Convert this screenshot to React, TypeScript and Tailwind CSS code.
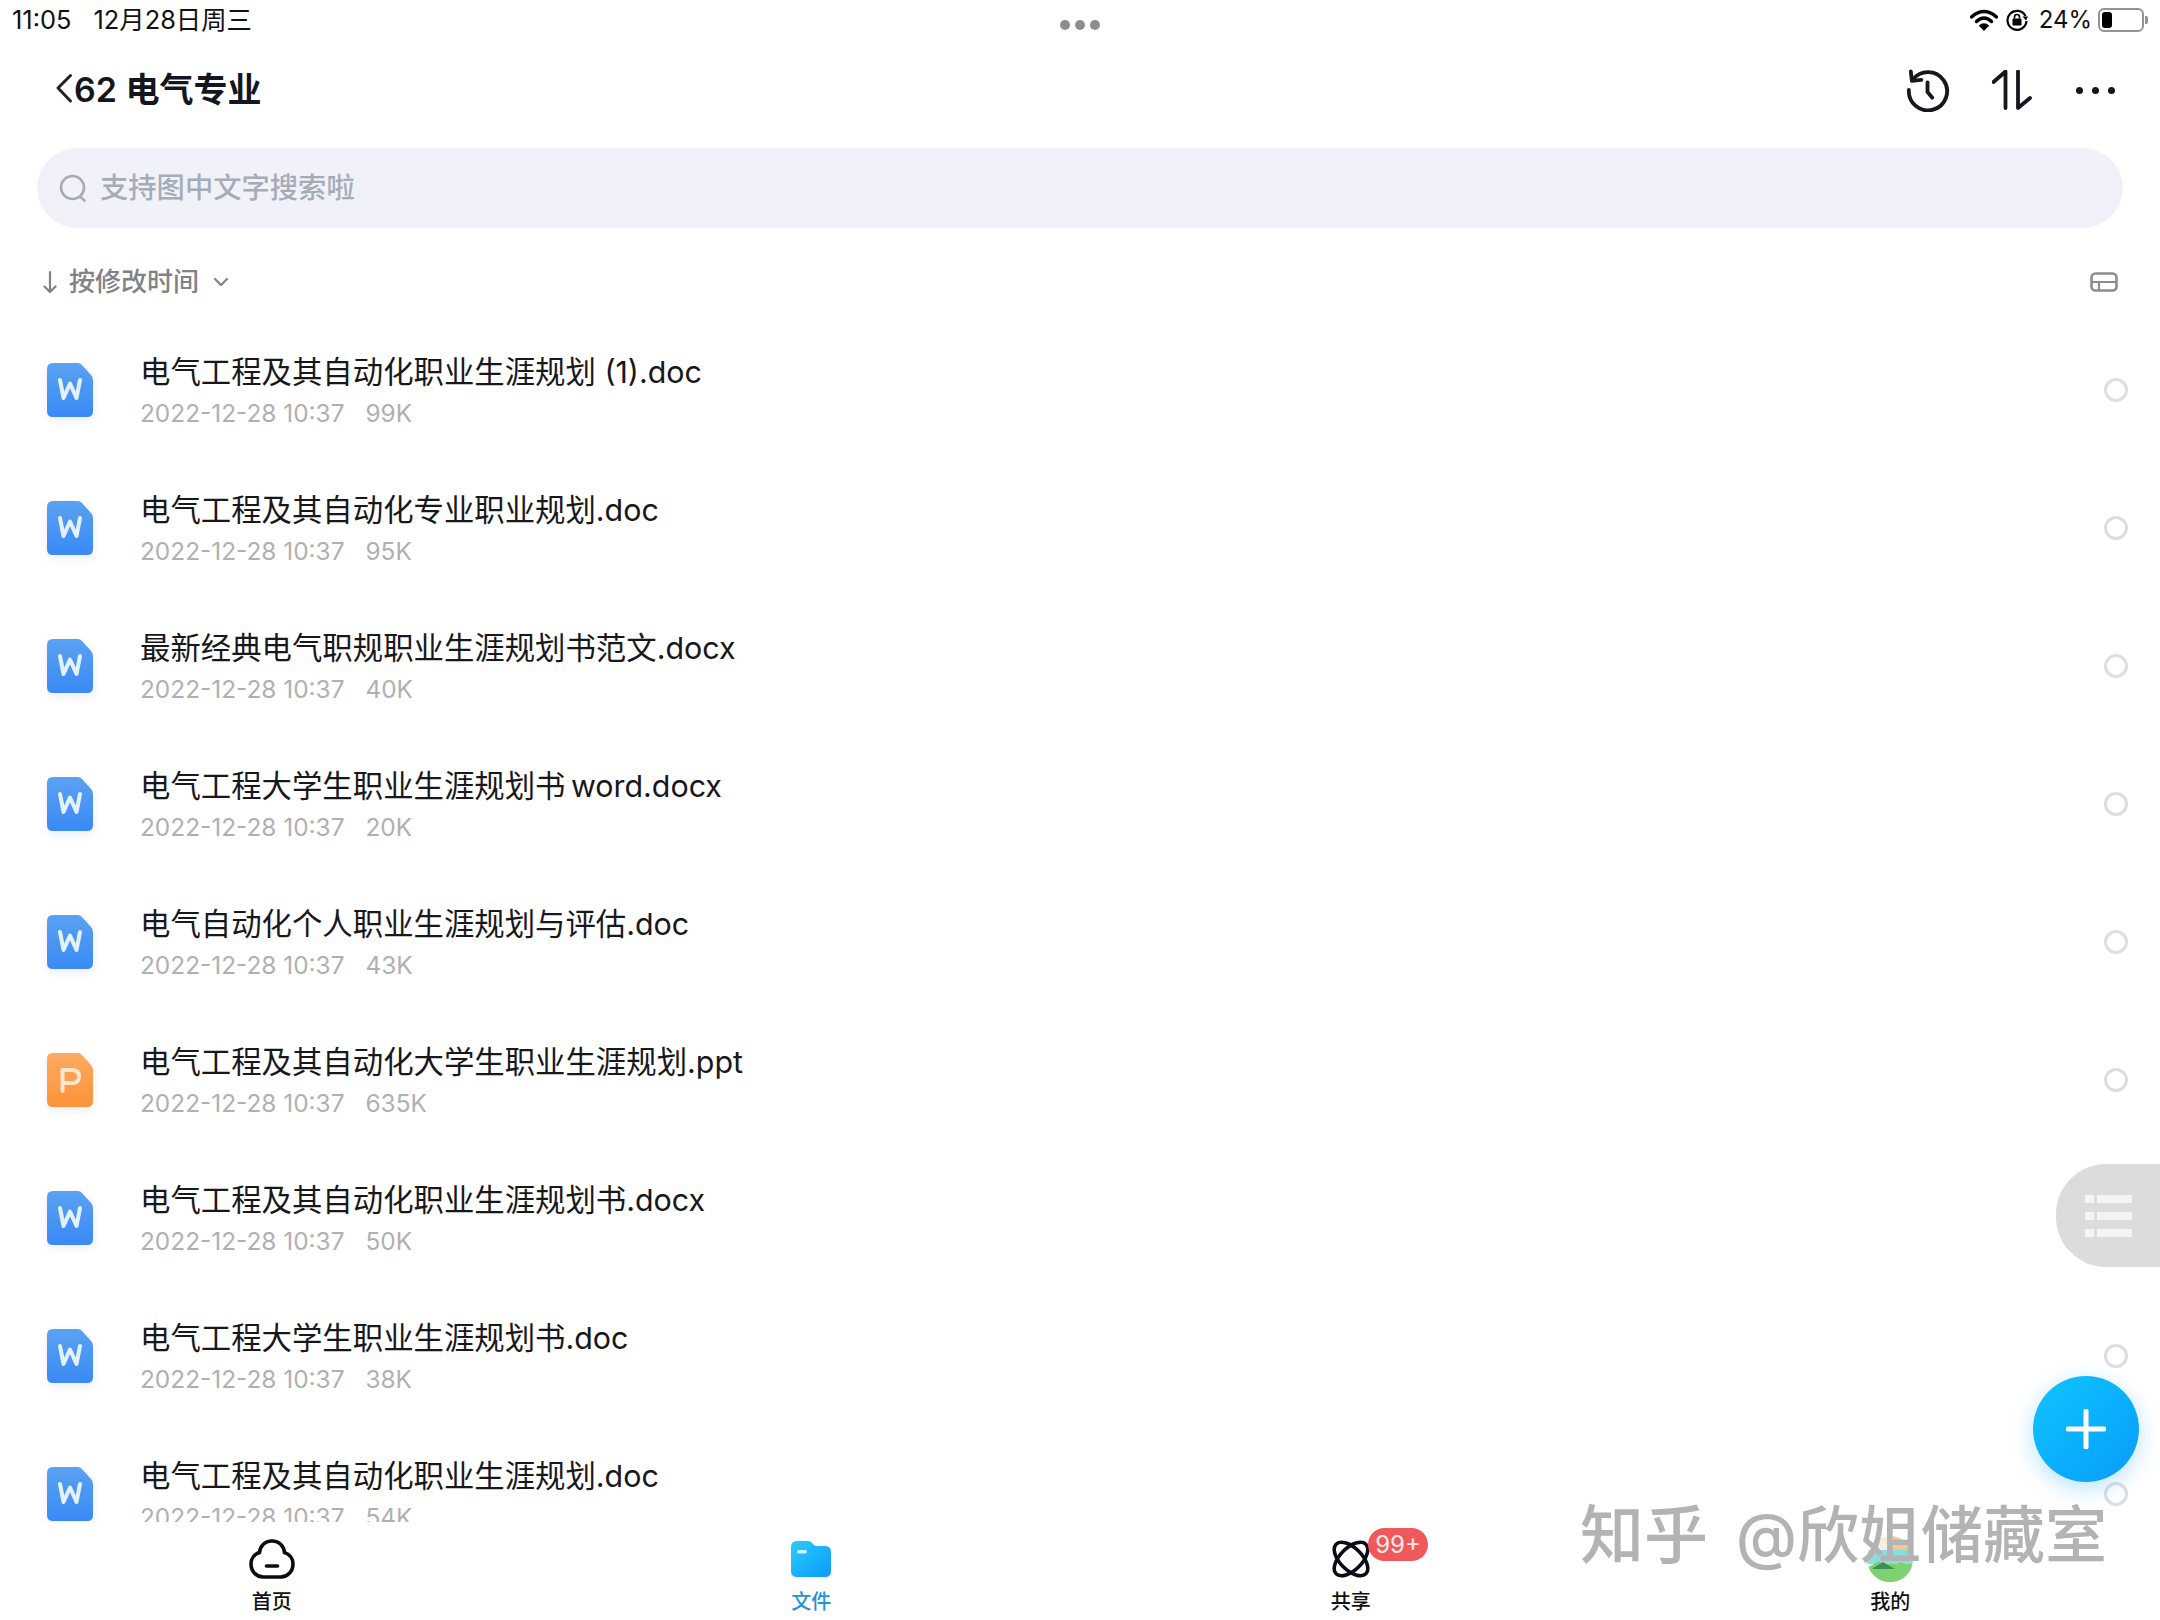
import React from 'react';

const FILES = [
  { name: '电气工程及其自动化职业生涯规划 (1).doc', size: '99K', type: 'W' },
  { name: '电气工程及其自动化专业职业规划.doc', size: '95K', type: 'W' },
  { name: '最新经典电气职规职业生涯规划书范文.docx', size: '40K', type: 'W' },
  { name: '电气工程大学生职业生涯规划书\u2009word.docx', size: '20K', type: 'W' },
  { name: '电气自动化个人职业生涯规划与评估.doc', size: '43K', type: 'W' },
  { name: '电气工程及其自动化大学生职业生涯规划.ppt', size: '635K', type: 'P' },
  { name: '电气工程及其自动化职业生涯规划书.docx', size: '50K', type: 'W' },
  { name: '电气工程大学生职业生涯规划书.doc', size: '38K', type: 'W' },
  { name: '电气工程及其自动化职业生涯规划.doc', size: '54K', type: 'W' },
];

const FONT = "font-['Inter','Noto_Sans_CJK_SC',sans-serif]";

const FileIcon: React.FC<{ type: string; id: number }> = ({ type, id }) => {
  const isWord = type === 'W';
  return (
    <svg width="46" height="54" viewBox="0 0 46 54" className="shrink-0 drop-shadow-[0_3px_5px_rgba(80,110,170,0.12)]">
      <defs>
        <linearGradient id={`file-${id}`} x1="0" y1="0" x2="0" y2="1">
          <stop offset="0" stopColor={isWord ? '#5aa2f2' : '#fdaa62'} />
          <stop offset="1" stopColor={isWord ? '#3a89f5' : '#fd9338'} />
        </linearGradient>
      </defs>
      <path
        d="M6 0H31Q33 0 35 2L44 12Q46 14 46 17V48Q46 54 40 54H6Q0 54 0 48V6Q0 0 6 0Z"
        fill={`url(#file-${id})`}
      />
      {isWord ? (
        <path
          d="M13 17L16.5 35L23 20.5L29.5 35L33 17"
          fill="none"
          stroke="#e3f1fd"
          strokeWidth="4"
          strokeLinecap="round"
          strokeLinejoin="round"
        />
      ) : (
        <path
          d="M15.5 38V17H25Q32 17 32 23.5T25 30H15.5"
          fill="none"
          stroke="#fde6cf"
          strokeWidth="4"
          strokeLinecap="round"
          strokeLinejoin="round"
        />
      )}
    </svg>
  );
};

const StatusBar = () => (
  <div className="h-[40px] shrink-0 relative flex items-center justify-between px-[12px] leading-none text-[#111]">
    <div className="flex items-center gap-[22px] -mt-[1px] text-[25.4px]">
      <span>11:05</span>
      <span>12月28日周三</span>
    </div>
    <div className="absolute left-[1060px] top-[20px] flex gap-[5px]">
      <span className="w-[10px] h-[10px] rounded-full bg-[#8d8d8f]" />
      <span className="w-[10px] h-[10px] rounded-full bg-[#8d8d8f]" />
      <span className="w-[10px] h-[10px] rounded-full bg-[#8d8d8f]" />
    </div>
    <div className="flex items-center -mt-[1px] text-[24px]">
      <svg width="28" height="22" viewBox="0 0 28 22" className="mr-[7px]">
        <path d="M1.5 8Q14 -3 26.5 8" fill="none" stroke="#000" strokeWidth="3.4" strokeLinecap="round" />
        <path d="M6.5 12.5Q14 5.5 21.5 12.5" fill="none" stroke="#000" strokeWidth="3.4" strokeLinecap="round" />
        <path d="M14 22L8.8 16.4Q14 12 19.2 16.4Z" fill="#000" />
      </svg>
      <svg width="24" height="24" viewBox="0 0 24 24" className="mr-[10px]">
        <path d="M20.5 8A9.5 9.5 0 1 0 21.5 13" fill="none" stroke="#000" strokeWidth="2.2" />
        <path d="M17.5 8.5H23L21 12.5Z" fill="#000" />
        <rect x="7.5" y="10.5" width="9" height="7" rx="1.2" fill="#000" />
        <path d="M9.5 10.5V9A2.5 2.5 0 0 1 14.5 9V10.5" fill="none" stroke="#000" strokeWidth="1.6" />
      </svg>
      <span className="mr-[6px]">24%</span>
      <div className="w-[46px] h-[24px] rounded-[6px] border-2 border-[#939393] p-[2px] flex">
        <div className="w-[10px] h-full rounded-[3px] bg-black" />
      </div>
      <div className="w-[3px] h-[8px] ml-[1px] rounded-r-[2px] bg-[#939393]" />
    </div>
  </div>
);

const TitleBar = () => (
  <div className="h-[100px] shrink-0 flex items-center justify-between pl-[55px] pr-[45px]">
    <div className="flex items-center text-[#14161f]">
      <svg width="18" height="32" viewBox="0 0 18 32" className="-mt-[3px]">
        <path d="M15.5 2.5L3 15L15.5 28" fill="none" stroke="#20232c" strokeWidth="3" strokeLinecap="round" strokeLinejoin="round" />
      </svg>
      <span className="text-[34px] font-semibold leading-none ml-[1px]">62 电气专业</span>
    </div>
    <div className="flex items-center">
      <svg width="44" height="44" viewBox="0 0 46 46" className="mr-[42px]">
        <path d="M6.8 12.5A20 20 0 1 1 3 23" fill="none" stroke="#15171f" strokeWidth="4" strokeLinecap="round" />
        <path d="M5 3.5L6.2 13.5L16 12.5" fill="none" stroke="#15171f" strokeWidth="4" strokeLinecap="round" strokeLinejoin="round" />
        <path d="M22.5 15V25L27.5 31" fill="none" stroke="#15171f" strokeWidth="4" strokeLinecap="round" strokeLinejoin="round" />
      </svg>
      <svg width="40" height="40" viewBox="0 0 40 40" className="mr-[44px]">
        <path d="M1.5 12L13.5 1.5V38" fill="none" stroke="#15171f" strokeWidth="3.8" strokeLinecap="round" strokeLinejoin="round" />
        <path d="M26 1.5V38L38 28" fill="none" stroke="#15171f" strokeWidth="3.8" strokeLinecap="round" strokeLinejoin="round" />
      </svg>
      <div className="flex gap-[9px]">
        <span className="w-[7px] h-[7px] rounded-full bg-[#15171f]" />
        <span className="w-[7px] h-[7px] rounded-full bg-[#15171f]" />
        <span className="w-[7px] h-[7px] rounded-full bg-[#15171f]" />
      </div>
    </div>
  </div>
);

const SearchBar = () => (
  <div className="mx-[37px] mt-[8px] h-[80px] shrink-0 rounded-full bg-[#f1f2f9] flex items-center pl-[22px]">
    <svg width="28" height="28" viewBox="0 0 28 28">
      <circle cx="13.5" cy="13.5" r="11.5" fill="none" stroke="#a5acb8" strokeWidth="2.6" />
      <path d="M21 22.5L25.5 26.5" stroke="#a5acb8" strokeWidth="2.6" strokeLinecap="round" />
    </svg>
    <span className="ml-[13px] text-[28.3px] leading-none font-medium text-[#a5acb8]">支持图中文字搜索啦</span>
  </div>
);

const SortRow = () => (
  <div className="h-[93px] shrink-0 flex items-center justify-between pt-[14px] pl-[43px] pr-[42px]">
    <div className="flex items-center text-[#7f8287]">
      <svg width="14" height="24" viewBox="0 0 14 24">
        <path d="M7 2V22M1.5 16.5L7 22L12.5 16.5" fill="none" stroke="#7f8287" strokeWidth="2.2" strokeLinecap="round" strokeLinejoin="round" />
      </svg>
      <span className="ml-[12px] text-[26px] leading-none font-medium">按修改时间</span>
      <svg width="16" height="10" viewBox="0 0 16 10" className="ml-[14px]">
        <path d="M2 2L8 8L14 2" fill="none" stroke="#7f8287" strokeWidth="2.2" strokeLinecap="round" strokeLinejoin="round" />
      </svg>
    </div>
    <svg width="28" height="20" viewBox="0 0 28 20">
      <rect x="1.5" y="1.5" width="25" height="17" rx="4" fill="none" stroke="#8b8d8f" strokeWidth="2.6" />
      <path d="M1.5 10H26.5M9 10V18" stroke="#8b8d8f" strokeWidth="2.2" />
    </svg>
  </div>
);

const Tab: React.FC<{ label: string; icon: React.ReactNode; active?: boolean }> = ({ label, icon, active }) => (
  <div className="flex flex-col items-center">
    <div className="h-[74px] flex items-center justify-center">{icon}</div>
    <span className={`text-[20px] leading-none font-medium -mt-[4px] ${active ? 'text-[#1f93d9]' : 'text-[#111]'}`}>
      {label}
    </span>
  </div>
);

const TabBar = () => (
  <div className="relative h-[98px] shrink-0 grid grid-cols-4 bg-white pl-[2px]">
    <Tab label="首页" icon={
      <svg width="46" height="40" viewBox="0 0 46 40">
        <path
          d="M23 2C15.5 2 11 7.5 10.5 13.5C5.5 15 2 19.5 2 25C2 32.5 7.5 38 14 38H32C38.5 38 44 32.5 44 25C44 19.5 40.5 15 35.5 13.5C35 7.5 30.5 2 23 2Z"
          fill="none"
          stroke="#0c0c10"
          strokeWidth="3.6"
        />
        <path d="M17.5 27H28.5" stroke="#0c0c10" strokeWidth="3.6" strokeLinecap="round" />
      </svg>
    } />
    <Tab label="文件" active icon={
      <svg width="40" height="36" viewBox="0 0 40 36">
        <defs>
          <linearGradient id="folder" x1="0" y1="0" x2="1" y2="1">
            <stop offset="0" stopColor="#2ccbfb" />
            <stop offset="1" stopColor="#0a9bfb" />
          </linearGradient>
        </defs>
        <path d="M6 0H17Q20 0 22 3L24 5H34Q40 5 40 11V30Q40 36 34 36H6Q0 36 0 30V6Q0 0 6 0Z" fill="url(#folder)" />
        <rect x="6" y="9" width="10" height="3.5" rx="1.7" fill="#d5f3fe" />
      </svg>
    } />
    <Tab label="共享" icon={
      <svg width="40" height="40" viewBox="0 0 40 40">
        <ellipse cx="20" cy="20" rx="21" ry="11" transform="rotate(45 20 20)" fill="none" stroke="#0c0c18" strokeWidth="3.6" />
        <ellipse cx="20" cy="20" rx="21" ry="11" transform="rotate(-45 20 20)" fill="none" stroke="#0c0c18" strokeWidth="3.6" />
      </svg>
    } />
    <Tab label="我的" icon={
      <svg width="46" height="46" viewBox="0 0 46 46">
        <defs>
          <clipPath id="avatar"><circle cx="23" cy="23" r="23" /></clipPath>
        </defs>
        <g clipPath="url(#avatar)">
          <rect width="46" height="46" fill="#f6efe0" />
          <rect x="22" y="0" width="24" height="14" fill="#f0c88f" />
          <rect x="0" y="14" width="46" height="14" fill="#86dde2" />
          <rect x="10" y="28" width="36" height="18" fill="#7fd06f" />
          <path d="M0 32L12 25L22 31L34 26L46 32V46H0Z" fill="#7fd06f" />
          <path d="M6 32L16 26L28 33H6Z" fill="#3d8f55" />
        </g>
      </svg>
    } />
    <div className="absolute left-[1368px] top-[6px] w-[60px] h-[33px] rounded-full bg-[#f0595c] flex items-center justify-center text-[24px] leading-none text-[#fde9e9]">
      99+
    </div>
  </div>
);

export default function App() {
  return (
    <div className={`${FONT} relative w-[2160px] h-[1620px] bg-white overflow-hidden flex flex-col`}>
      <StatusBar />
      <TitleBar />
      <SearchBar />
      <SortRow />

      <div className="flex-1 min-h-0 overflow-hidden">
        {FILES.map((file, i) => (
          <div key={i} className="h-[138px] flex items-center pl-[47px] pr-[32px]">
            <FileIcon type={file.type} id={i} />
            <div className="ml-[47px] flex-1 min-w-0">
              <div className="text-[30.4px] leading-[40px] text-[#18181c]">{file.name}</div>
              <div className="mt-[6px] flex gap-[21px] text-[24.4px] leading-[30px] text-[#b0b0b2]">
                <span>2022-12-28 10:37</span>
                <span>{file.size}</span>
              </div>
            </div>
            <span className="w-[24px] h-[24px] -mt-[1px] rounded-full border-[3px] border-[#dededf]" />
          </div>
        ))}
      </div>

      <TabBar />

      {/* side list pill */}
      <div className="absolute left-[2056px] top-[1164px] w-[104px] h-[103px] rounded-l-[50px] bg-[#dcdcdf] flex flex-col justify-center gap-[9px] pl-[29px]">
        {[0, 1, 2].map((n) => (
          <div key={n} className="flex gap-[3px]">
            <span className="w-[9px] h-[8px] bg-[#f4f4f5]" />
            <span className="w-[35px] h-[8px] bg-[#f4f4f5]" />
          </div>
        ))}
      </div>

      {/* add button */}
      <div className="absolute left-[2033px] top-[1376px] w-[106px] h-[106px] rounded-full bg-gradient-to-br from-[#12c4fd] to-[#0a9cfa] shadow-[0_6px_22px_rgba(20,160,250,0.3)] flex items-center justify-center">
        <svg width="40" height="40" viewBox="0 0 40 40">
          <path d="M20 2V38M2 20H38" stroke="#fff" strokeWidth="5" strokeLinecap="round" />
        </svg>
      </div>

      {/* watermark */}
      <div className="absolute left-[1580px] top-[1497px] text-[64px] leading-[76px] font-medium text-[#b3b3b3] whitespace-nowrap">
        知乎<span className="ml-[28px] text-[62px]">@欣姐储藏室</span>
      </div>
    </div>
  );
}
